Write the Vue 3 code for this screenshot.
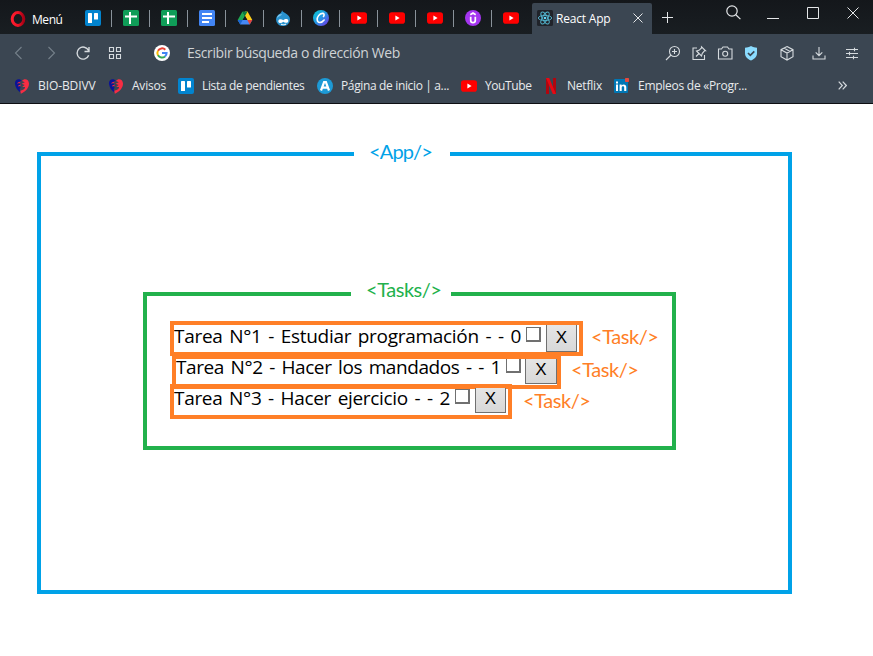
<script setup>
const tabs = ['trello', 'sheets', 'sheets', 'docs', 'drive', 'drupal', 'canva', 'youtube', 'youtube', 'youtube', 'udemy', 'youtube']

const bookmarks = [
  { icon: 'heart', text: 'BIO-BDIVV', width: 57.5, slot: 94 },
  { icon: 'heart', text: 'Avisos', width: 34, slot: 70 },
  { icon: 'trello', text: 'Lista de pendientes', width: 102.5, slot: 139 },
  { icon: 'platzi', text: 'Página de inicio | a...', width: 108, slot: 144 },
  { icon: 'youtube', text: 'YouTube', width: 46.5, slot: 82 },
  { icon: 'netflix', text: 'Netflix', width: 35, slot: 71 },
  { icon: 'linkedin', text: 'Empleos de «Progr...', width: 109, slot: 160 },
]

const tasks = [
  { text: 'Tarea N°1 - Estudiar programación - - 0', width: 347 },
  { text: 'Tarea N°2 - Hacer los mandados - - 1', width: 325 },
  { text: 'Tarea N°3 - Hacer ejercicio - - 2', width: 276 },
]

// Spreads the letters of a label so that it fills the given width.
const vFit = {
  mounted(el, { value }) {
    const natural = el.getBoundingClientRect().width
    el.style.letterSpacing = `${(value - natural) / el.textContent.length}px`
  },
}
</script>

<template>
  <div class="window">
    <svg class="sprite" aria-hidden="true">
      <defs>
        <linearGradient id="g-canva" x1="0" y1="0" x2="1" y2="1">
          <stop offset="0" stop-color="#08cfd2" /><stop offset=".5" stop-color="#2594e5" /><stop offset="1" stop-color="#7d2ae8" />
        </linearGradient>
        <linearGradient id="g-opera" x1="0" y1="0" x2="1" y2="0">
          <stop offset="0" stop-color="#ff1b2d" /><stop offset=".5" stop-color="#ee1426" /><stop offset="1" stop-color="#a70014" />
        </linearGradient>
      </defs>
      <symbol id="trello" viewBox="0 0 16 16">
        <rect width="16" height="16" rx="2" fill="#0284cf" />
        <rect x="3" y="3" width="4" height="10" rx=".6" fill="#fff" /><rect x="9" y="3" width="4" height="6.5" rx=".6" fill="#fff" />
      </symbol>
      <symbol id="sheets" viewBox="0 0 16 16">
        <rect width="16" height="16" rx="1.5" fill="#0f9d58" />
        <path d="M6 2h2v3.500h6v2H8V14H6V7.500H2v-2h4z" fill="#fff" />
      </symbol>
      <symbol id="docs" viewBox="0 0 16 16">
        <rect width="16" height="16" rx="1.500" fill="#4285f4" />
        <path d="M3 3h10v2H3zM3 7h10v2H3zM3 11h7v2H3z" fill="#fff" />
      </symbol>
      <symbol id="drive" viewBox="0 0 16 16">
        <path d="M5.500 1.500 8 6 3.500 14 .7 10z" fill="#20a852" />
        <path d="M8 1.500h2.500L15.300 10h-5L8 6z" fill="#ffcf1a" />
        <path d="M5.500 1.500h5L8 6z" fill="#0b8043" />
        <path d="M8 6 5.700 10h4.600z" fill="#171b20" />
        <path d="M.7 10h14.600l-2.600 4.500H3.300z" fill="#4688f4" />
        <path d="M10.300 10h5l-2.600 4.500z" fill="#ea4335" />
        <path d="M.7 10h5l-2.400 4.500z" fill="#1967d2" />
      </symbol>
      <symbol id="drupal" viewBox="0 0 16 16">
        <path d="M7 0c.4 2 2 2.400 4.200 3.700 2.400 1.500 3.800 3.400 3.800 5.800a6.900 6.500 0 0 1-14 0c0-2.600 1.500-4.300 3.500-5.600C6 2.900 7 2 7 0z" fill="#2a93cf" />
        <path d="M4 4.500C2.500 5.700 2 7 2 8.500c1-2.500 4-2 5-4.500z" fill="#7cc5ec" />
        <path d="M8.300 10.300C6.500 8.600 3.300 8.800 3.300 11.200c0 2.300 3 2.300 5 .6 1.700 1.700 5 1.300 5-.9 0-2.400-3.300-2.300-5-.6z" fill="#fff" />
        <path d="M6 14.200c1.500.7 3.500.7 5-.1" fill="none" stroke="#fff" stroke-width="1" />
      </symbol>
      <symbol id="canva" viewBox="0 0 16 16">
        <circle cx="8" cy="8" r="8" fill="url(#g-canva)" />
        <path d="M10.500 6.500c1.200-1.700.6-3.200-1.100-3.100C6.300 3.600 4 7 4.200 9.800c.3 3.700 4.500 3.400 6.900.2" fill="none" stroke="#fff" stroke-width="1.600" stroke-linecap="round" />
      </symbol>
      <symbol id="youtube" viewBox="0 0 16 16">
        <rect y="2.300" width="16" height="11.400" rx="2.800" fill="#f00" /><path d="M6.400 5.600v4.800L10.600 8z" fill="#fff" />
      </symbol>
      <symbol id="udemy" viewBox="0 0 16 16">
        <circle cx="8" cy="8" r="8" fill="#a435f0" />
        <path d="M5.700 6.700v3.600c0 3.200 4.600 3.200 4.600 0V6.700M5.300 4.800 8 3.100l2.700 1.700" fill="none" stroke="#fff" stroke-width="1.700" />
      </symbol>
      <symbol id="react" viewBox="0 0 16 16">
        <rect width="16" height="16" rx="1.500" fill="#20232a" />
        <g fill="none" stroke="#53b6cf" stroke-width=".9">
          <ellipse cx="8" cy="8" rx="6.700" ry="2.600" /><ellipse cx="8" cy="8" rx="6.700" ry="2.600" transform="rotate(60 8 8)" /><ellipse cx="8" cy="8" rx="6.700" ry="2.600" transform="rotate(120 8 8)" />
        </g>
        <circle cx="8" cy="8" r="1.300" fill="#61dafb" />
      </symbol>
      <symbol id="heart" viewBox="0 0 16 16">
        <path d="M7.500 2.600C5-.4.400 1.500 1 6c.4 3.500 2.700 6.600 5.800 8.800L5.500 11 7 9.500 4.800 9l2.500-2-2.600-1.300z" fill="#0a1397" />
        <path d="M8 3c2-3 6.900-2 7 2.500.1 4.700-4 8.400-8.200 10.200l-.5-3c3.300-.6 4.700-2 4.800-3.700L8.200 9l2.400-2-2.900-1.200 3.100-1.500z" fill="#f72d43" />
        <path d="M3.500 5.200 6.400 4M4.200 8l2.700-1" stroke="#f72d43" stroke-width="1" />
      </symbol>
      <symbol id="platzi" viewBox="0 0 16 16">
        <circle cx="8" cy="8" r="8" fill="#1d9ad6" />
        <path d="M4 12.500 7.100 4h1.800L12 12.500M5.500 9.700h5" fill="none" stroke="#fff" stroke-width="2.200" />
      </symbol>
      <symbol id="netflix" viewBox="0 0 16 16">
        <path d="M3 0h3v16H3zM10 0h3v16h-3z" fill="#b1060f" /><path d="M3 0h3.200L13 16H9.800z" fill="#e50914" />
      </symbol>
      <symbol id="linkedin" viewBox="0 0 16 16">
        <rect y="1" width="14" height="14" rx="1" fill="#0077b5" />
        <path d="M2 6.500h2V13H2zM2 3.500h2v2H2zM5.600 6.500h2v1c1.200-1.800 4.700-1.500 4.700 1.600V13h-2.100V9.700c0-2-2.500-1.900-2.500 0V13H5.600z" fill="#fff" />
        <rect x="11" y="0" width="4" height="4" rx=".7" fill="#e34a3f" />
      </symbol>
    </svg>

    <header class="titlebar">
      <svg class="opera" viewBox="0 0 16 16"><ellipse cx="8" cy="8" rx="5.800" ry="6.500" fill="none" stroke="url(#g-opera)" stroke-width="3" /></svg>
      <span class="menu"><span v-fit="30.5">Menú</span></span>
      <nav class="tabs">
        <span v-for="(tab, i) in tabs" :key="i" class="tab"><svg class="icon"><use :href="'#' + tab" /></svg></span>
      </nav>
      <div class="active-tab">
        <svg class="icon"><use href="#react" /></svg>
        <span class="tab-title"><span v-fit="54.500">React App</span></span>
        <svg class="close" viewBox="0 0 10 10"><path d="M.5.500l9 9M9.500.5l-9 9" /></svg>
      </div>
      <svg class="plus" viewBox="0 0 11 11"><path d="M5.500 0v11M0 5.500h11" /></svg>
      <svg class="search" viewBox="0 0 15 15"><circle cx="6" cy="6" r="5.200" /><path d="M9.800 9.800l4.600 4.300" /></svg>
      <svg class="minimize" viewBox="0 0 12 12"><path d="M0 .5h12" /></svg>
      <svg class="maximize" viewBox="0 0 12 12"><path d="M.5.500h11v11H.5z" /></svg>
      <svg class="quit" viewBox="0 0 12 12"><path d="M.5.500l11 11M11.500.5l-11 11" /></svg>
    </header>

    <div class="toolbar">
      <svg class="tool back" viewBox="0 0 16 16"><path d="M10.500 2 4.500 8l6 6" /></svg>
      <svg class="tool forward" viewBox="0 0 16 16"><path d="M5.500 2l6 6-6 6" /></svg>
      <svg class="tool reload" viewBox="0 0 16 16"><path d="M13.700 10.200A6 6 0 1 1 13.500 5.500M14 2v4.500H9.500" /></svg>
      <svg class="tool grid" viewBox="0 0 16 16"><path d="M2.500 2.500h4v4h-4zM9.500 2.500h4v4h-4zM2.500 9.500h4v4h-4zM9.500 9.500h4v4h-4z" /></svg>
      <svg class="google" viewBox="0 0 16 16">
        <circle cx="8" cy="8" r="8" fill="#fff" />
        <g fill="none" stroke-width="2">
          <path d="M11.300 4.700A4.600 4.600 0 0 0 4 5.800" stroke="#ea4335" /><path d="M4 5.700a4.600 4.600 0 0 0 0 4.700" stroke="#fbbc05" />
          <path d="M4 10.300a4.600 4.600 0 0 0 7 1.100" stroke="#34a853" /><path d="M8 8h4.600c0 1.500-.6 2.600-1.600 3.400" stroke="#4285f4" />
        </g>
      </svg>
      <span class="address"><span v-fit="213">Escribir búsqueda o dirección Web</span></span>
      <svg class="tool zoom" viewBox="0 0 16 16"><circle cx="9.500" cy="6.500" r="5" /><path d="M6 10l-5 5M9.500 4v5M7 6.500h5" /></svg>
      <svg class="tool pin" viewBox="0 0 16 16"><path d="M6 3H2v11.500h11.500V10M5 11.500l3-3M5.500 6l5 5 .8-2.700 2.200-2.500h1L10.500 1.800v1.100L8 5.300z" /></svg>
      <svg class="tool camera" viewBox="0 0 16 16"><path d="M1.500 4h3L6 2h4.500L12 4h3v10H1.500z" /><circle cx="8.200" cy="8.700" r="2.500" /></svg>
      <svg class="shield" viewBox="0 0 16 16"><path d="M8 1c2 1.200 4 1.600 6 1.800V8c0 4-2.700 6-6 7.500C4.700 14 2 12 2 8V2.800C4 2.600 6 2.200 8 1z" fill="#8bdcff" /><path d="M5 8l2.300 2.300 4-4" fill="none" stroke="#3b4652" stroke-width="1.700" /></svg>
      <svg class="tool cube" viewBox="0 0 16 16"><path d="M8 1.500l6 3.200v7L8 15l-6-3.300v-7zM2 4.700 8 8l6-3.300M8 8v7M5 3.100l6 3.300" /></svg>
      <svg class="tool download" viewBox="0 0 16 16"><path d="M8 2v8.500M4.700 7.300 8 10.600l3.300-3.300M2 10.500V14h12v-3.500" /></svg>
      <svg class="tool sliders" viewBox="0 0 16 16"><path d="M2 4.500h12M2 8.500h12M2 12.500h12M10.500 2.800V6.200M5.500 6.800v3.400M9.500 10.800v3.400" /></svg>
    </div>

    <div class="bookmarks">
      <span v-for="(b, i) in bookmarks" :key="i" class="bookmark" :style="{ width: b.slot + 'px' }">
        <svg class="icon"><use :href="'#' + b.icon" /></svg><span v-fit="b.width">{{ b.text }}</span>
      </span>
      <svg class="more" viewBox="0 0 9 9"><path d="M.7.700l3.600 3.800L.7 8.300M4.700.7l3.600 3.800-3.600 3.800" /></svg>
    </div>

    <main class="page">
      <section class="app-box">
        <div class="box-label app-label"><span v-fit="63">&lt;App/&gt;</span></div>
        <section class="tasks-box">
          <div class="box-label tasks-label"><span v-fit="75.500">&lt;Tasks/&gt;</span></div>
          <div v-for="(t, i) in tasks" :key="i" class="task-row" :class="'row-' + i">
            <div class="task">
              <span class="task-text"><span v-fit="t.width">{{ t.text }}</span></span>
              <span class="check"></span>
              <button class="remove">X</button>
            </div>
            <span class="task-label"><span v-fit="67.500">&lt;Task/&gt;</span></span>
          </div>
        </section>
      </section>
    </main>
  </div>
</template>

<style>
body {
  margin: 0;
  background: #fff;
}
</style>

<style scoped>
.window {
  width: 873px;
  height: 656px;
  overflow: hidden;
  font-family: "Open Sans", "Noto Sans", sans-serif;
  white-space: nowrap;
}
.window * { box-sizing: border-box; }
svg { display: block; flex: none; }
.sprite { position: absolute; width: 0; height: 0; }
.icon { width: 16px; height: 16px; }

.titlebar {
  display: flex;
  align-items: flex-start;
  height: 34px;
  background: linear-gradient(#14171b, #191e22);
  color: #fff;
  font-size: 12px;
}
.titlebar > svg { fill: none; stroke: #e4e6e8; stroke-width: 1; }
.opera { width: 16px; height: 16px; margin: 11px 0 0 10px; }
.menu { width: 48px; margin: 11px 0 0 6px; line-height: 17px; }
.tabs { display: flex; margin-left: 5px; padding-top: 10px; }
.tab {
  display: flex;
  width: 38px;
  height: 17px;
  border-right: 1px solid #89929a;
}
.tab:first-child { width: 27px; }
.tab:not(:first-child) { padding-left: 11px; }
.tab:last-child { border-right: 0; width: 40px; }
.active-tab {
  display: flex;
  align-items: flex-start;
  width: 120px;
  height: 31px;
  margin-top: 3px;
  padding: 7px 0 0 5px;
  border-radius: 2px 2px 0 0;
  background: #3b4652;
}
.tab-title { width: 78px; margin-left: 3px; line-height: 17px; }
.close { width: 10px; height: 10px; margin: 3px 0 0 -1px; fill: none; stroke: #e4e6e8; }
.plus { width: 11px; height: 11px; margin: 12px 0 0 10px; }
.search { width: 15px; height: 15px; margin: 5px 0 0 53px; }
.titlebar > .search { stroke-width: 1.200; }
.minimize { width: 12px; height: 12px; margin: 18px 0 0 26px; }
.maximize { width: 12px; height: 12px; margin: 7px 0 0 28px; }
.quit { width: 12px; height: 12px; margin: 7px 0 0 28px; }

.toolbar {
  display: flex;
  align-items: center;
  height: 38px;
  background: #3b4652;
}
.tool { width: 16px; height: 16px; fill: none; stroke: #d5dade; stroke-width: 1.100; }
.back { margin-left: 11px; stroke: #75808a; }
.forward { margin-left: 16px; stroke: #75808a; }
.reload { margin-left: 16px; stroke-width: 1.400; }
.grid { margin-left: 16px; }
.google { width: 16px; height: 16px; margin-left: 31px; }
.address { width: 494px; margin: -1px 0 0 17px; color: #cfd3d6; font-size: 14px; }
.address + .tool { margin-left: -16px; }
.pin { margin-left: 10px; }
.camera { margin-left: 10px; }
.shield { width: 16px; height: 16px; margin-left: 10px; }
.cube { margin-left: 20px; }
.download { margin-left: 16px; }
.sliders { margin-left: 17px; }

.bookmarks {
  display: flex;
  align-items: center;
  height: 32px;
  padding: 0 0 4px 14px;
  border-bottom: 1px solid #0d0f12;
  background: #3b4652;
  color: #e8eaec;
  font-size: 12px;
}
.bookmark { display: flex; flex: none; align-items: center; gap: 8px; height: 28px; }
.more { width: 9px; height: 9px; margin-left: 64px; fill: none; stroke: #d5dade; stroke-width: 1.200; }

.page { padding: 48px 0 0 37px; }
.app-box {
  position: relative;
  width: 755px;
  height: 442px;
  padding: 136px 0 0 102px;
  border: 4px solid #00a2e8;
}
.tasks-box {
  position: relative;
  width: 533px;
  height: 158px;
  padding: 25px 0 0 23px;
  border: 4px solid #22b14c;
}
.box-label {
  position: absolute;
  height: 24px;
  padding-left: 15px;
  background: #fff;
  line-height: 24px;
}
.box-label, .task-label { font-family: Lato, sans-serif; font-size: 20px; }
.app-label { top: -17px; left: 313px; width: 96px; color: #00a2e8; }
.tasks-label { top: -19px; left: 204px; width: 100px; color: #22b14c; }

.task-row { display: flex; align-items: flex-start; }
.task {
  display: flex;
  align-items: flex-start;
  width: 413px;
  height: 35px;
  overflow: hidden;
  border: 4px solid #ff7f27;
}
.task-text {
  flex: none;
  width: 352px;
  margin-top: 1px;
  color: #000;
  font-size: 19px;
  line-height: 20px;
  word-spacing: 2px;
}
.check {
  flex: none;
  width: 15px;
  height: 15px;
  margin-top: 2px;
  border: 1px solid #707070;
  border-width: 1px 2px 2px 1px;
  background: #fff;
}
.remove {
  flex: none;
  width: 31px;
  height: 32px;
  margin: -5px 0 0 5px;
  padding: 3px 0 0;
  border: 1px solid #707070;
  border-radius: 0;
  background: linear-gradient(#e8e8e8, #d8d8d8);
  color: #000;
  font: 17px/24px "Liberation Sans", sans-serif;
}
.task-label { margin: 3px 0 0 8px; line-height: 24px; color: #ff7f27; }
.row-1 { margin: -1px 0 0 2px; }
.row-1 .task { width: 389px; height: 34px; }
.row-1 .task-text { width: 330px; margin-top: -2px; }
.row-1 .check { margin-top: -1px; }
.row-1 .remove { width: 32px; margin: -7px 0 0 4px; }
.row-1 .task-label { margin: 2px 0 0 10px; }
.row-2 { margin-top: -5px; }
.row-2 .task { position: relative; width: 342px; height: 35px; }
.row-2 .task-text { width: 281px; margin-top: 0; }
.row-2 .check { margin-top: 1px; }
.row-2 .remove { margin-top: -7px; }
.row-2 .task-label { margin: 4px 0 0 11px; }
</style>
